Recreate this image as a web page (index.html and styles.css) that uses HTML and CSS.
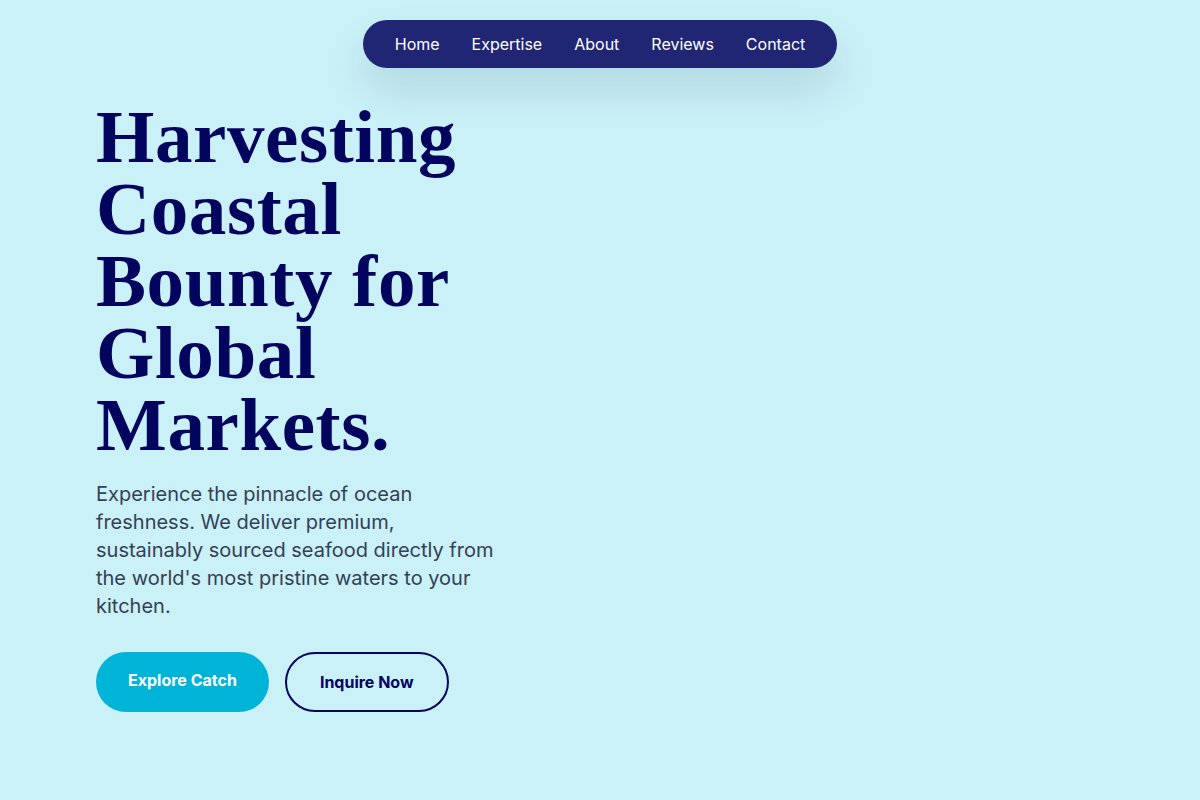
FILE: index.html
```html
<!DOCTYPE html>
<html lang="en">
<head>
<meta charset="utf-8">
<title>Coastal Bounty</title>
<link rel="stylesheet" href="styles.css">
</head>
<body>
  <header class="topbar">
    <nav class="nav-pill">
      <a href="#" class="nav-link">Home</a>
      <a href="#" class="nav-link">Expertise</a>
      <a href="#" class="nav-link">About</a>
      <a href="#" class="nav-link">Reviews</a>
      <a href="#" class="nav-link">Contact</a>
    </nav>
  </header>

  <main class="hero">
    <div class="hero-copy">
      <h1 class="hero-title">Harvesting Coastal Bounty for Global Markets.</h1>
      <p class="hero-lead">Experience the pinnacle of ocean freshness. We deliver premium, sustainably sourced seafood directly from the world's most pristine waters to your kitchen.</p>
      <div class="hero-actions">
        <a href="#" class="btn btn-primary">Explore Catch</a>
        <a href="#" class="btn btn-outline">Inquire Now</a>
      </div>
    </div>
  </main>
</body>
</html>
```

FILE: styles.css
```css
* {
  box-sizing: border-box;
}

html, body {
  margin: 0;
  padding: 0;
}

body {
  background: #caf0f8;
  font-family: "Inter", "Liberation Sans", sans-serif;
  color: #334155;
  min-height: 800px;
}

/* floating navigation */
.topbar {
  display: flex;
  justify-content: center;
  padding-top: 20px;
}

.nav-pill {
  display: flex;
  gap: 32px;
  padding: 12px 32px;
  background: rgba(3, 4, 94, 0.86);
  border-radius: 24px;
  box-shadow: 0 22px 40px rgba(0, 40, 60, 0.12);
}

.nav-link {
  color: #ffffff;
  text-decoration: none;
  font-size: 16px;
  line-height: 24px;
}

/* hero */
.hero {
  padding: 0 96px;
}

.hero-copy {
  width: 400px;
}

.hero-title {
  margin: 33px 0 0;
  font-family: "Liberation Serif", "DejaVu Serif", serif;
  font-weight: 700;
  font-size: 75px;
  line-height: 72px;
  letter-spacing: 0.6px;
  color: #03045e;
}

.hero-lead {
  margin: 19px 0 0;
  font-size: 20px;
  line-height: 28px;
  color: #334155;
}

.hero-actions {
  display: flex;
  gap: 16px;
  margin-top: 32px;
}

.btn {
  display: inline-block;
  font-weight: 700;
  font-size: 16px;
  line-height: 24px;
  text-decoration: none;
  border-radius: 30px;
}

.btn-primary {
  padding: 16px 32px 20px;
  background: #00b4d8;
  color: #ffffff;
}

.btn-outline {
  padding: 16px 33px;
  border: 2px solid #03045e;
  color: #03045e;
}
```
